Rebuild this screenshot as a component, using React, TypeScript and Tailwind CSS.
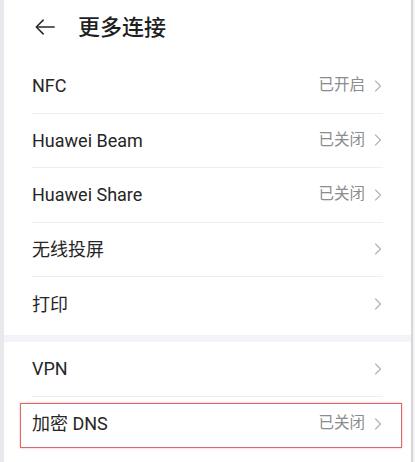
import { ChevronRight } from "lucide-react"

type Item = {
  label: string
  status?: string
  highlight?: boolean
}

const mainItems: Item[] = [
  { label: "NFC", status: "已开启" },
  { label: "Huawei Beam", status: "已关闭" },
  { label: "Huawei Share", status: "已关闭" },
  { label: "无线投屏" },
  { label: "打印" },
]

const netItems: Item[] = [
  { label: "VPN" },
  { label: "加密 DNS", status: "已关闭", highlight: true },
]

const font = { fontFamily: '"Roboto", "Noto Sans CJK SC", sans-serif' }

function Row({ item, last }: { item: Item; last: boolean }) {
  return (
    <div className="relative h-[54.5px] px-[28px]">
      <div className={`flex h-full items-center ${last ? "" : "border-b border-[#efedf1]"}`}>
        <span className="flex-1 text-[18px] text-[#262626]">{item.label}</span>
        {item.status && <span className="mr-[3px] text-[15.5px] text-[#8c8c8c]">{item.status}</span>}
        <ChevronRight className="mr-[-5px] h-[20px] w-[20px] text-[#b4b4b4]" strokeWidth={1.4} />
      </div>
      {item.highlight && (
        <div className="pointer-events-none absolute left-[16px] right-[9px] top-[6px] bottom-[3px] border-[1.5px] border-[#e06666] shadow-[0_0_2px_rgba(224,102,102,0.5)]" />
      )}
    </div>
  )
}

export default function App() {
  return (
    <div className="flex h-[462px] w-[415px] overflow-hidden bg-[#e9e8ec]" style={font}>
      <div className="ml-[4px] flex w-[407px] flex-col bg-[#f5f3f7]">
        <div className="bg-white">
          {/* 标题栏 */}
          <div className="flex h-[59px] items-center pb-[5px]">
            <svg className="ml-[30px] h-[22px] w-[22px]" viewBox="0 0 24 24" fill="none" stroke="#2a2a2a" strokeWidth={1.7} strokeLinecap="round" strokeLinejoin="round">
              <path d="M22 12H3" />
              <path d="M10 4.5 2.5 12l7.5 7.5" />
            </svg>
            <h1 className="ml-[22px] text-[22px] font-medium text-[#1f1f1f]">更多连接</h1>
          </div>
          {mainItems.map((item, i) => (
            <Row key={item.label} item={item} last={i === mainItems.length - 1} />
          ))}
          <div className="h-[3px]" />
        </div>
        <div className="h-[9px]" />
        <div className="bg-white pb-[11px]">
          {netItems.map((item, i) => (
            <Row key={item.label} item={item} last={i === netItems.length - 1} />
          ))}
        </div>
      </div>
      <div className="w-[2px] bg-[#d6d6da]" />
      <div className="flex-1 bg-[#f4f4f6]" />
    </div>
  )
}
